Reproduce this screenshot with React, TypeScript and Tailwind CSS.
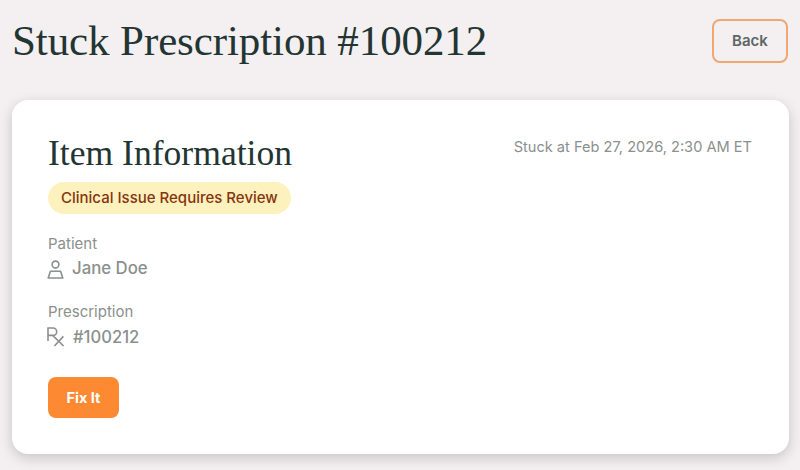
import React from "react";

const serif = "font-['Liberation_Serif',serif]";
const sans = "font-['Inter',sans-serif]";

const PersonIcon = () => (
  <svg className="-ml-px" width="17" height="19" viewBox="0 0 17 19" fill="none" stroke="#8b8f8e" strokeWidth="1.6">
    <circle cx="8.5" cy="4.5" r="3.4" />
    <path d="M3.4 11.2h10.2l2.2 6.8H1.2z" strokeLinejoin="round" />
  </svg>
);

const RxIcon = () => (
  <svg className="-ml-px" width="18" height="20" viewBox="0 0 18 20" fill="none" stroke="#8b8f8e" strokeWidth="1.6">
    <path d="M1 14V1h5a3.6 3.6 0 0 1 0 7.4H1M5.6 8.4l11 10.6M16.4 9.4 7.4 19" />
  </svg>
);

export default function App() {
  return (
    <div className={`h-[470px] w-[800px] overflow-hidden bg-[#f4eff0] ${sans}`}>
      <div className="flex h-[100px] items-start justify-between pl-3 pr-3">
        <h1 className={`mt-[13px] text-[43px] leading-[56px] tracking-[-0.1px] text-[#233532] ${serif}`}>
          Stuck Prescription #100212
        </h1>
        <button className="mt-[19px] h-[44px] w-[76px] rounded-lg border-2 border-[#f0a873] text-[15px] font-semibold text-[#5c6664]">
          Back
        </button>
      </div>

      <div className="ml-3 h-[354px] w-[777px] rounded-2xl bg-white pl-9 pr-[37px] pt-[32px] shadow-[0_4px_14px_rgba(0,0,0,0.18)]">
        <div className="flex items-start justify-between">
          <h2 className={`text-[35.6px] leading-[43px] text-[#233532] ${serif}`}>Item Information</h2>
          <span className="mt-[6px] text-[14.6px] leading-[18px] text-[#8b8f8e]">
            Stuck at Feb 27, 2026, 2:30 AM ET
          </span>
        </div>

        <span className="mt-[7px] inline-flex h-[32px] items-center rounded-full bg-[#fdf1bd] px-[13px] text-[15px] font-medium text-[#86350f]">
          Clinical Issue Requires Review
        </span>

        <div className="mt-[21px] text-[15px] leading-[18px] text-[#8b8f8e]">Patient</div>
        <div className="mt-[4px] flex h-[24px] items-center gap-[8px]">
          <PersonIcon />
          <span className="text-[16.8px] font-medium text-[#8b8f8e]">Jane Doe</span>
        </div>

        <div className="mt-[22px] text-[15px] leading-[18px] text-[#8b8f8e]">Prescription</div>
        <div className="mt-[4px] flex h-[24px] items-center gap-[8px]">
          <RxIcon />
          <span className="text-[16.6px] font-medium text-[#8b8f8e]">#100212</span>
        </div>

        <button className="mt-[28px] h-[41px] w-[71px] rounded-lg bg-[#fd8a33] text-[14.5px] font-bold text-white">
          Fix It
        </button>
      </div>
    </div>
  );
}
